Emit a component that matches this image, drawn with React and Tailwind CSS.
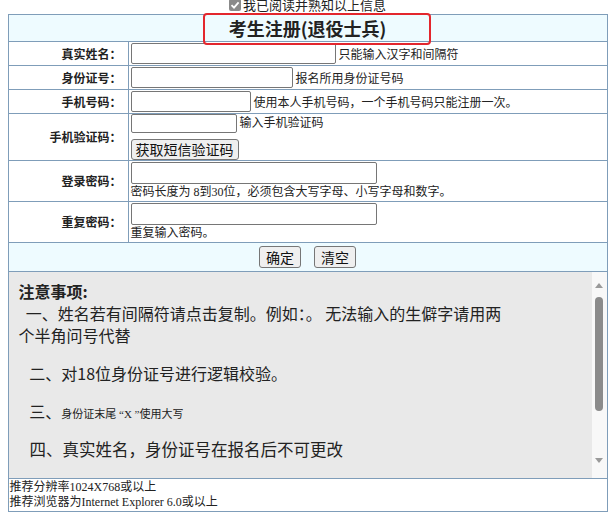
import React from 'react';

const line = 'border-[#7f9db9]';

function Row({ label, h, children }) {
  return (
    <div className={`flex border-t border-[#7f9db9] ${h}`}>
      <div className="w-[120px] shrink-0 border-r border-[#7f9db9] flex items-center justify-end pr-[6px] text-[12px] font-bold text-[#222]">
        {label}
      </div>
      <div className="flex-1 flex flex-col justify-center pl-[2px]">{children}</div>
    </div>
  );
}

function Field({ w, h = 'h-[21px]' }) {
  return <input type="text" className={`${w} ${h} border border-[#767676] rounded-[2px] bg-white`} />;
}

const Hint = ({ children }) => (
  <span className="ml-[3px] text-[12px] leading-[16px] text-[#222]">{children}</span>
);

const btn =
  'border border-[#767676] rounded-[3px] bg-[#efefef] text-[#111] leading-none';

export default function App() {
  return (
    <div className="relative w-[615px] h-[517px] bg-white overflow-hidden font-['Noto_Sans_CJK_SC',sans-serif]">
      {/* checkbox line, scrolled mostly out of view */}
      <div className="h-[14px] overflow-hidden flex items-end justify-center">
        <div className="flex items-center h-[18px] gap-[2px] text-[13px] leading-[18px] text-[#222]">
          <svg width="12" height="12" viewBox="0 0 12 12">
            <rect x="0" y="0" width="12" height="12" rx="2" fill="#8a8a8a" />
            <path d="M2.5 6.2 L5 8.7 L9.6 3.4" stroke="#fff" strokeWidth="1.8" fill="none" />
          </svg>
          <span>我已阅读并熟知以上信息</span>
        </div>
      </div>

      <div className={`w-[600px] mx-auto border ${line}`}>
        {/* header */}
        <div className="h-[26px] bg-[#eefbff] flex items-center justify-center text-[18px] font-bold text-[#222]">
          考生注册(退役士兵)
        </div>

        <Row label="真实姓名：" h="h-[24px]">
          <div className="flex items-center">
            <Field w="w-[205px]" />
            <Hint>只能输入汉字和间隔符</Hint>
          </div>
        </Row>
        <Row label="身份证号：" h="h-[24px]">
          <div className="flex items-center">
            <Field w="w-[162px]" />
            <Hint>报名所用身份证号码</Hint>
          </div>
        </Row>
        <Row label="手机号码：" h="h-[24px]">
          <div className="flex items-center">
            <Field w="w-[120px]" />
            <Hint>使用本人手机号码，一个手机号码只能注册一次。</Hint>
          </div>
        </Row>
        <Row label="手机验证码：" h="h-[47px]">
          <div className="flex items-start">
            <Field w="w-[106px]" h="h-[19px]" />
            <Hint>输入手机验证码</Hint>
          </div>
          <div className="mt-[3px]">
            <button className={`${btn} w-[108px] h-[21px] text-[14px]`}>获取短信验证码</button>
          </div>
        </Row>
        <Row label="登录密码：" h="h-[41px]">
          <Field w="w-[246px]" h="h-[22px]" />
          <span className="text-[12px] leading-[16px] text-[#222] font-['Liberation_Serif','Noto_Sans_CJK_SC',serif]">
            密码长度为 8到30位，必须包含大写字母、小写字母和数字。
          </span>
        </Row>
        <Row label="重复密码：" h="h-[41px]">
          <Field w="w-[246px]" h="h-[22px]" />
          <span className="text-[12px] leading-[16px] text-[#222] font-['Liberation_Serif','Noto_Sans_CJK_SC',serif]">
            重复输入密码。
          </span>
        </Row>

        {/* buttons */}
        <div className={`h-[29px] border-t ${line} bg-[#eefbff] flex items-center justify-center gap-[13px]`}>
          <button className={`${btn} w-[42px] h-[22px] text-[14px]`}>确定</button>
          <button className={`${btn} w-[42px] h-[22px] text-[14px]`}>清空</button>
        </div>

        {/* notice */}
        <div className={`h-[207px] border-t ${line} flex`}>
          <div className="flex-1 bg-[#e9e9e9] overflow-hidden pl-[10px] pt-[8px] text-[16px] leading-[22px] text-[#222]">
            <div className="font-bold">注意事项:</div>
            <div className="w-[490px]">&nbsp;&nbsp;一、姓名若有间隔符请点击复制。例如：。 无法输入的生僻字请用两个半角问号代替</div>
            <div className="mt-[16px]">&nbsp;&nbsp;&nbsp;二、对18位身份证号进行逻辑校验。</div>
            <div className="mt-[16px] flex items-baseline">
              <span>&nbsp;&nbsp;&nbsp;三、</span>
              <span className="text-[11px] font-['Liberation_Serif','Noto_Sans_CJK_SC',serif]">身份证末尾 “X ”使用大写</span>
            </div>
            <div className="mt-[12px] text-[16.5px] leading-[24px]">&nbsp;&nbsp;&nbsp;四、真实姓名，身份证号在报名后不可更改</div>
          </div>
          <div className="w-[15px] bg-[#f8f8f8] flex flex-col items-center pt-[11px] pb-[15px]">
            <svg width="8" height="5" viewBox="0 0 8 5">
              <path d="M0 5 L4 0 L8 5 Z" fill="#9a9a9a" />
            </svg>
            <div className="mt-[9px] w-[8px] h-[114px] rounded-full bg-[#8b8b8b]" />
            <div className="flex-1" />
            <svg width="8" height="5" viewBox="0 0 8 5">
              <path d="M0 0 L8 0 L4 5 Z" fill="#9a9a9a" />
            </svg>
          </div>
        </div>

        {/* footer */}
        <div className={`h-[33px] border-t ${line} pl-[1px] pt-[1px] text-[12px] leading-[15px] text-[#222] font-['Liberation_Serif','Noto_Sans_CJK_SC',serif]`}>
          <div>推荐分辨率1024X768或以上</div>
          <div>推荐浏览器为Internet Explorer 6.0或以上</div>
        </div>
      </div>

      {/* red annotation box */}
      <div className="absolute left-[203px] top-[13px] w-[228px] h-[32px] border-2 border-[#e3262d] rounded-[4px] pointer-events-none" />
    </div>
  );
}
